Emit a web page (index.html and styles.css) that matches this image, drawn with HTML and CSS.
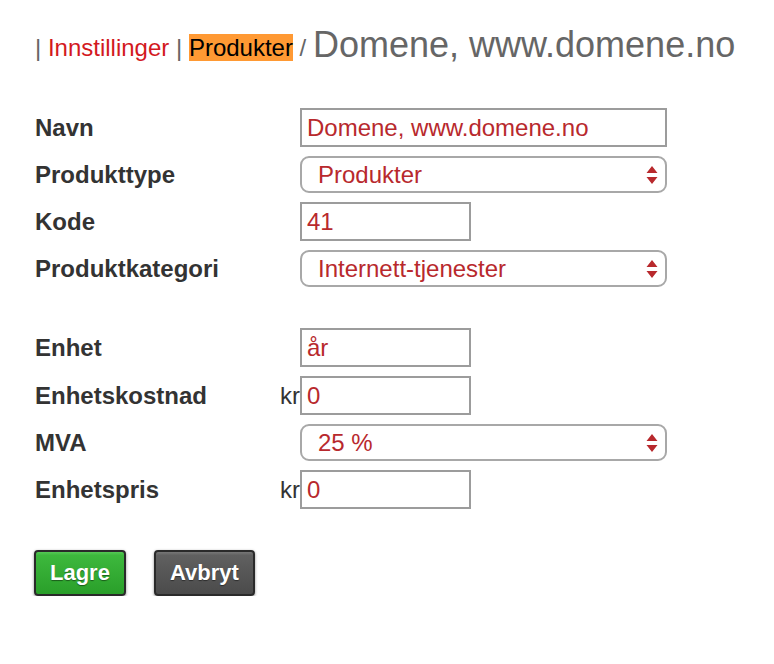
FILE: index.html
```html
<!DOCTYPE html>
<html lang="no">
<head>
<meta charset="utf-8">
<title>Domene, www.domene.no</title>
<link rel="stylesheet" href="styles.css">
</head>
<body>
<div class="page">
  <h1 class="crumbs"><span class="small">| <a class="link" href="#">Innstillinger</a> | <span class="current">Produkter</span> / </span>Domene, www.domene.no</h1>

  <form class="form">
    <label class="label">Navn</label>
    <div class="field"><span class="prefix"></span><input class="input long" type="text" value="Domene, www.domene.no"></div>

    <label class="label">Produkttype</label>
    <div class="field"><span class="prefix"></span>
      <div class="select-wrap long">
        <select class="select"><option>Produkter</option></select>
        <svg class="arrows" width="12" height="20" viewBox="0 0 12 20"><path d="M6 1 L11.5 8 H0.5 Z M6 19 L11.5 12 H0.5 Z" fill="#b8292d"/></svg>
      </div>
    </div>

    <label class="label">Kode</label>
    <div class="field"><span class="prefix"></span><input class="input short" type="text" value="41"></div>

    <label class="label">Produktkategori</label>
    <div class="field"><span class="prefix"></span>
      <div class="select-wrap long">
        <select class="select"><option>Internett-tjenester</option></select>
        <svg class="arrows" width="12" height="20" viewBox="0 0 12 20"><path d="M6 1 L11.5 8 H0.5 Z M6 19 L11.5 12 H0.5 Z" fill="#b8292d"/></svg>
      </div>
    </div>

    <div class="spacer"></div>

    <label class="label">Enhet</label>
    <div class="field"><span class="prefix"></span><input class="input short" type="text" value="år"></div>

    <label class="label">Enhetskostnad</label>
    <div class="field"><span class="prefix">kr</span><input class="input short" type="text" value="0"></div>

    <label class="label">MVA</label>
    <div class="field"><span class="prefix"></span>
      <div class="select-wrap long">
        <select class="select"><option>25 %</option></select>
        <svg class="arrows" width="12" height="20" viewBox="0 0 12 20"><path d="M6 1 L11.5 8 H0.5 Z M6 19 L11.5 12 H0.5 Z" fill="#b8292d"/></svg>
      </div>
    </div>

    <label class="label">Enhetspris</label>
    <div class="field"><span class="prefix">kr</span><input class="input short" type="text" value="0"></div>
  </form>

  <div class="buttons">
    <button class="btn btn-save" type="button">Lagre</button>
    <button class="btn btn-cancel" type="button">Avbryt</button>
  </div>
</div>
</body>
</html>
```

FILE: styles.css
```css
* { box-sizing: border-box; }

html, body {
  margin: 0;
  padding: 0;
  background: #fff;
}

body {
  font-family: "Liberation Sans", Arial, Helvetica, sans-serif;
  color: #333;
}

.page {
  padding: 24px 0 0 35px;
}

.crumbs {
  margin: 0;
  font-size: 36px;
  font-weight: normal;
  line-height: 41px;
  color: #666;
  white-space: nowrap;
}

.small {
  font-size: 24px;
  color: #666;
  vertical-align: 1px;
}

.link {
  color: #d3191e;
  text-decoration: none;
}

.current {
  background: #ff9933;
  color: #000;
}

.form {
  margin-top: 40px;
  display: grid;
  grid-template-columns: 245px auto;
  row-gap: 9px;
  align-items: center;
}

.label {
  font-size: 24px;
  font-weight: bold;
  color: #333;
}

.field {
  display: flex;
  align-items: center;
}

.prefix {
  width: 20px;
  font-size: 24px;
  color: #333;
  text-align: right;
  white-space: nowrap;
}

.spacer {
  grid-column: 1 / -1;
  height: 23px;
}

.input {
  height: 39px;
  border: 2px solid #9c9c9c;
  border-radius: 0;
  padding: 0 5px;
  font-family: "Liberation Sans", Arial, sans-serif;
  font-size: 24px;
  color: #b8292d;
  background: #fff;
  outline: none;
}

.long { width: 367px; }
.short { width: 171px; }

.select-wrap {
  position: relative;
  height: 37px;
}

.select {
  appearance: none;
  -webkit-appearance: none;
  width: 100%;
  height: 37px;
  border: 2px solid #a8a8a8;
  border-radius: 9px;
  padding: 0 30px 0 16px;
  font-family: "Liberation Sans", Arial, sans-serif;
  font-size: 24px;
  color: #b8292d;
  background: #fff;
  outline: none;
}

.arrows {
  position: absolute;
  right: 9px;
  top: 9px;
  pointer-events: none;
}

.buttons {
  margin-top: 41px;
  display: flex;
  gap: 28px;
  margin-left: -1px;
}

.btn {
  height: 46px;
  padding: 0 14px;
  border: 2px solid #2a2a2a;
  border-radius: 4px;
  font-family: "Liberation Sans", Arial, sans-serif;
  font-size: 22px;
  font-weight: bold;
  color: #fff;
  text-shadow: 0 1px 1px rgba(0, 0, 0, 0.45);
  box-shadow: 0 1px 3px rgba(0, 0, 0, 0.45);
  cursor: pointer;
}

.btn-save {
  background: linear-gradient(#55c955 0, #3db83d 8%, #33ab33 55%, #2a9f2a 100%);
}

.btn-cancel {
  background: linear-gradient(#777 0, #606060 8%, #555 55%, #4b4b4b 100%);
}
```
